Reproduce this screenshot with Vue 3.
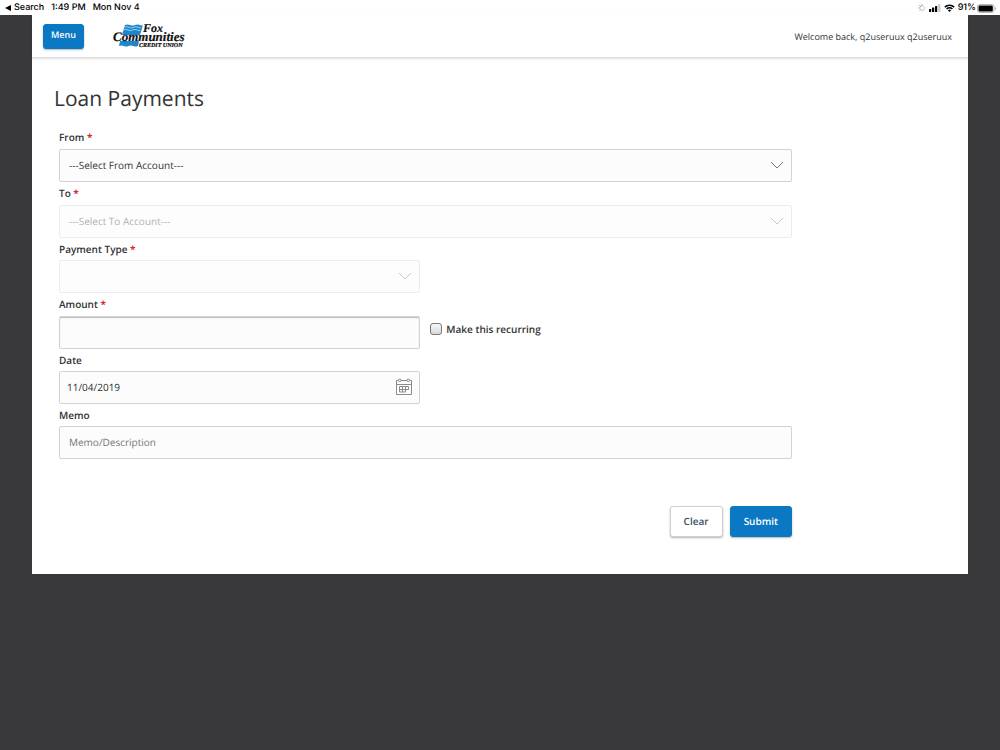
<script setup>
import { ref } from 'vue'

const from = ref('')
const to = ref('')
const paymentType = ref('')
const amount = ref('')
const date = ref('11/04/2019')
const memo = ref('')
const recurring = ref(false)
const rays = [0, 45, 90, 135, 180, 225, 270, 315]

function clearForm() {
  from.value = ''
  to.value = ''
  paymentType.value = ''
  amount.value = ''
  memo.value = ''
  recurring.value = false
}
</script>

<template>
  <div class="screen">
    <div class="status">
      <div class="status-group">
        <span class="back"><svg width="6" height="6" viewBox="0 0 6 6" aria-hidden="true"><path d="M0 3 6 0v6z" fill="#000" /></svg>Search</span>
        <span>1:49 PM</span>
        <span>Mon Nov 4</span>
      </div>
      <div class="status-group icons">
        <svg width="8" height="8" viewBox="-4 -4 8 8" aria-hidden="true">
          <path v-for="r in rays" :key="r" d="M0-3.5V-1.7" stroke="#666" stroke-width=".9" :opacity="1 - r / 450" :transform="`rotate(${-r})`" />
        </svg>
        <svg width="12" height="8" viewBox="0 0 12 8" aria-hidden="true">
          <rect x="0" y="5" width="2.2" height="3" rx=".5" /><rect x="3" y="3.6" width="2.2" height="4.4" rx=".5" />
          <rect x="6" y="2" width="2.2" height="6" rx=".5" /><rect x="9.2" y="0" width="2.2" height="8" rx=".5" fill="#c9c9c9" />
        </svg>
        <svg width="11" height="8" viewBox="0 0 11 8" fill="none" stroke="#000" stroke-width="1.5" aria-hidden="true">
          <path d="M.8 3.1a6.7 6.7 0 0 1 9.4 0M2.6 5a4.1 4.1 0 0 1 5.8 0" /><path d="M5.5 8 3.900 6.300a2.300 2.300 0 0 1 3.200 0z" fill="#000" stroke="none" />
        </svg>
        <span class="charge">91%
          <svg width="19" height="9" viewBox="0 0 19 9" aria-hidden="true">
            <rect x=".5" y=".5" width="16.5" height="8" rx="2.2" fill="none" stroke="#a5a5a5" stroke-width=".8" />
            <rect x="1.5" y="1.5" width="14.3" height="6" rx="1.2" /><path d="M18 3v3q1-.5 1-1.500t-1-1.500" fill="#a5a5a5" />
          </svg>
        </span>
      </div>
    </div>

    <div class="page">
      <header class="top">
        <button type="button" class="btn primary menu">Menu</button>
        <svg class="logo" width="74" height="30" viewBox="0 -2 74 30" role="img" aria-label="Fox Communities Credit Union">
          <path d="M12 2q2.500-1.200 5 0t5 0 5 0 3 0L27 12H9z" fill="#1c86cf" />
          <path d="M11.500 4.300q2.300-1.200 4.600 0t4.600 0 4.600 0 3 0M10.500 7q2.300-1.200 4.600 0t4.600 0 4.600 0 3 0" fill="none" stroke="#a9d5f2" stroke-width=".9" />
          <path d="M7 18h19l-1 5q-2.400 1-4.700 0t-4.700 0-4.700 0-4.900 0z" fill="#1c86cf" />
          <g class="logo-type">
            <text x="30" y="9" font-size="12">Fox</text>
            <text x="0" y="17.500" font-size="13">Communities</text>
            <text x="26" y="23.500" font-size="6">CREDIT UNION</text>
          </g>
        </svg>
        <span class="welcome">Welcome back, q2useruux q2useruux</span>
      </header>

      <main>
        <h1>Loan Payments</h1>
        <form @submit.prevent>
          <div class="field required">
            <label for="from">From <b>*</b></label>
            <div class="control">
              <select id="from" v-model="from" required><option value="">---Select From Account---</option></select>
              <svg class="chevron" width="14" height="8" viewBox="0 0 14 8" aria-hidden="true"><path d="M1 1 7 7 13 1" /></svg>
            </div>
          </div>
          <div class="field required">
            <label for="to">To <b>*</b></label>
            <div class="control off">
              <select id="to" v-model="to" disabled><option value="">---Select To Account---</option></select>
              <svg class="chevron" width="14" height="8" viewBox="0 0 14 8" aria-hidden="true"><path d="M1 1 7 7 13 1" /></svg>
            </div>
          </div>
          <div class="field half">
            <label for="type">Payment Type <b>*</b></label>
            <div class="control off">
              <select id="type" v-model="paymentType" disabled><option value=""></option></select>
              <svg class="chevron" width="14" height="8" viewBox="0 0 14 8" aria-hidden="true"><path d="M1 1 7 7 13 1" /></svg>
            </div>
          </div>
          <div class="row">
            <div class="field required half">
              <label for="amount">Amount <b>*</b></label>
              <div class="control"><input id="amount" v-model="amount" class="inset" type="text" required></div>
            </div>
            <label class="check"><input v-model="recurring" type="checkbox">Make this recurring</label>
          </div>
          <div class="field half">
            <label for="date">Date</label>
            <div class="control">
              <input id="date" v-model="date" class="date" type="text">
              <svg class="calendar" width="18" height="18" viewBox="0 0 18 18" fill="none" stroke="#8b8b8b" aria-hidden="true">
                <path d="M3.500 2.500H1.500v14h15v-14h-2M6 2.500h6M1.500 6.500h15" />
                <circle cx="4.800" cy="2.300" r="1.300" /><circle cx="13.200" cy="2.300" r="1.300" />
                <path d="M4.500 8.500h9v3h-3v2.500h-6zM4.500 11.500h9M7.500 8.500v5.500M10.500 8.500v5.500" />
              </svg>
            </div>
          </div>
          <div class="field">
            <label for="memo">Memo</label>
            <div class="control"><input id="memo" v-model="memo" type="text" placeholder="Memo/Description"></div>
          </div>
          <div class="actions">
            <button type="button" class="btn plain" @click="clearForm">Clear</button>
            <button type="submit" class="btn primary">Submit</button>
          </div>
        </form>
      </main>
    </div>
  </div>
</template>

<style>
body { background: #39393b; }
</style>

<style scoped>
* { box-sizing: border-box; text-rendering: geometricPrecision; }
.screen { min-height: 100vh; background: #39393b; font-family: "Open Sans", sans-serif; color: #333; font-size: 10px; }
.status { height: 15px; background: #fff; display: flex; justify-content: space-between; align-items: center; padding: 1px 4px 0 5px; font: 500 9px/14px Inter, sans-serif; color: #000; }
.status-group { display: flex; align-items: center; gap: 7px; }
.back { display: flex; align-items: center; gap: 3px; }
.icons { gap: 3px; }
.charge { display: flex; align-items: center; gap: 1px; }
.page { margin: 0 32px; background: #fff; padding-bottom: 37px; }
.top { height: 43px; display: flex; align-items: center; padding: 0 16px 0 11px; border-bottom: 1px solid #e0e0e0; box-shadow: 0 1px 2px rgba(0, 0, 0, .12); }
.btn { font: 600 10px/16px "Open Sans", sans-serif; height: 31px; padding: 0 13px 2px; border: 1px solid #0a78c2; border-radius: 3px; box-shadow: 0 1px 2px rgba(0, 0, 0, .3); }
.primary { background: #0a78c2; color: #fff; }
.plain { background: #fff; color: #3a5266; border-color: #d0d0d0; }
.menu { font-size: 9px; height: 25px; padding: 0 7px 2px; }
.logo { margin-left: 29px; }
.logo-type { font-family: "Liberation Serif", serif; font-style: italic; font-weight: 700; fill: #111; stroke: #111; stroke-width: .2; }
.welcome { margin-left: auto; font-size: 9px; }
main { padding: 24px 22px 0; }
h1 { margin: 0; font-size: 21px; line-height: 34px; font-weight: 400; }
form { margin: 10px 0 0 5px; max-width: 733px; }
.field label { display: block; height: 22px; line-height: 22px; font-weight: 600; }
.required label { height: 23px; line-height: 23px; }
.field b { color: #d9252a; font-weight: 700; }
.half { width: 49.3%; flex: none; }
.control { position: relative; }
.control select, .control input { display: block; width: 100%; height: 33px; margin: 0; padding: 0 9px 2px; border: 1px solid #d2d2d2; border-radius: 2px; background: #fcfcfc; color: #333; font: 400 10px/16px "Open Sans", sans-serif; appearance: none; opacity: 1; }
.control .inset { box-shadow: inset 0 1px 1px #bbb; }
.control .date { padding-left: 7px; }
.control input::placeholder { color: #757575; opacity: 1; }
.off { opacity: .4; }
.chevron { position: absolute; right: 8px; top: 12px; fill: none; stroke: #777; pointer-events: none; }
.calendar { position: absolute; right: 7px; top: 7px; pointer-events: none; }
.row { display: flex; gap: 10px; }
.check { display: flex; align-items: center; gap: 4px; padding-top: 16px; font-weight: 600; }
.check input { appearance: none; width: 12px; height: 12px; margin: 0; border: 1px solid #777; border-radius: 3px; background: linear-gradient(#f8f8f8, #d8d8d8); }
.actions { display: flex; justify-content: flex-end; gap: 7px; margin-top: 47px; }
</style>
